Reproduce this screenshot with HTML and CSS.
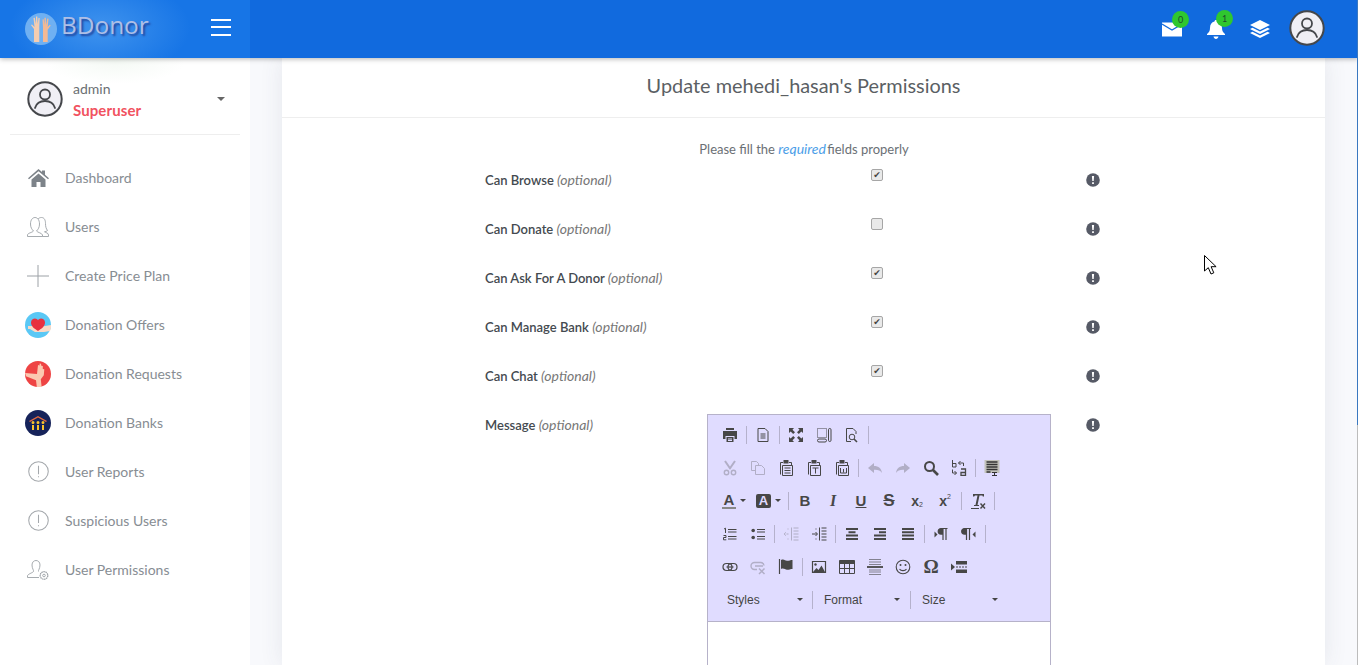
FILE: index.html
```html
<!DOCTYPE html>
<html lang="en">
<head>
<meta charset="UTF-8">
<title>BDonor - User Permissions</title>
<link rel="stylesheet" href="styles.css">
</head>
<body>
<svg class="defs" width="0" height="0">
  <symbol id="avatar" viewBox="0 0 36 36">
    <circle cx="18" cy="18" r="16.7" fill="#f0eff5" stroke="#45474b" stroke-width="2"/>
    <circle cx="18" cy="13.5" r="5" fill="none" stroke="#45474b" stroke-width="1.8"/>
    <path d="M8 27c1.500-5 5.500-7 10-7s8.500 2 10 7" fill="none" stroke="#45474b" stroke-width="1.8" stroke-linecap="round"/>
  </symbol>
  <symbol id="alert" viewBox="0 0 20 20">
    <circle cx="10" cy="10" r="9.300" fill="none" stroke="#a4a8ac"/>
    <path d="M10 4.500v8M10 14.500v1" stroke="#a4a8ac" fill="none"/>
  </symbol>
  <symbol id="info" viewBox="0 0 14 14">
    <circle cx="7" cy="7" r="6.800" fill="#565a66"/>
    <path d="M5.900 3h2.200l-.4 5H6.300zM6.100 9.200h1.800V11H6.100z" fill="#fff"/>
  </symbol>

  <symbol id="print" viewBox="0 0 16 16"><path d="M4 1h8v2H4zM1 4h14v8h-2.500V9h-9v3H1zM4.500 10h7v5h-7z" fill="currentColor"/><path d="M6 12h4M6 13.500h4" stroke="#e0dcff"/></symbol>
  <symbol id="doc" viewBox="0 0 16 16"><path d="M3 1.500h7l3 3v10H3zM5.500 7h5M5.500 9h5M5.500 11h5" fill="none" stroke="currentColor"/></symbol>
  <symbol id="maximize" viewBox="0 0 16 16"><path d="M1 1h5L4.500 2.700 7 5.200 5.200 7 2.700 4.500 1 6zM15 1v5l-1.700-1.500L10.800 7 9 5.200l2.500-2.500L10 1zM1 15v-5l1.700 1.500L5.200 9 7 10.800l-2.500 2.500L6 15zM15 15h-5l1.500-1.700L9 10.800 10.800 9l2.500 2.500L15 10z" fill="currentColor"/></symbol>
  <symbol id="blocks" viewBox="0 0 16 16"><path d="M1.500 1.500h9v9h-9z" fill="none" stroke="currentColor" stroke-dasharray="1 1"/><rect x="1.500" y="12" width="9" height="3" rx="1.500" fill="none" stroke="currentColor"/><rect x="12.500" y="1.500" width="2.500" height="13" rx="1.200" fill="none" stroke="currentColor"/></symbol>
  <symbol id="preview" viewBox="0 0 16 16"><path d="M7 14.500H2.500v-13H9l3 3V7" fill="none" stroke="currentColor"/><circle cx="8" cy="10" r="2.800" fill="none" stroke="currentColor"/><path d="M10 12l3 3" stroke="currentColor" stroke-width="1.600"/></symbol>
  <symbol id="cut" viewBox="0 0 16 16"><path d="M3 1l5.500 8M13 1L7.500 9" stroke="currentColor" stroke-width="2" fill="none"/><circle cx="4.500" cy="12.500" r="2.200" fill="none" stroke="currentColor" stroke-width="1.400"/><circle cx="11.500" cy="12.500" r="2.200" fill="none" stroke="currentColor" stroke-width="1.400"/></symbol>
  <symbol id="copy" viewBox="0 0 16 16"><path d="M1.500 1.500h5l2 2v2M1.500 1.500v9h4M5.500 5.500h6l3 3v6h-9z" fill="none" stroke="currentColor"/></symbol>
  <symbol id="paste" viewBox="0 0 16 16"><path d="M2.500 14.500v-12H5M11 2.500h2.500V5" fill="none" stroke="currentColor"/><path d="M5.500 0h5v3.500h-5z" fill="currentColor"/><path d="M4.500 5.500h10v10h-10zM6.500 8h6M6.500 10.500h6M6.500 13h6" fill="none" stroke="currentColor"/></symbol>
  <symbol id="paste-text" viewBox="0 0 16 16"><path d="M2.500 14.500v-12H5M11 2.500h2.500V5" fill="none" stroke="currentColor"/><path d="M5.500 0h5v3.500h-5z" fill="currentColor"/><path d="M4.500 5.500h10v10h-10zM6.500 8h6M9.500 8v5.500" fill="none" stroke="currentColor"/></symbol>
  <symbol id="paste-word" viewBox="0 0 16 16"><path d="M2.500 14.500v-12H5M11 2.500h2.500V5" fill="none" stroke="currentColor"/><path d="M5.500 0h5v3.500h-5z" fill="currentColor"/><path d="M4.500 5.500h10v10h-10zM6.500 8v5h6V8M9.500 9v3.500" fill="none" stroke="currentColor"/></symbol>
  <symbol id="undo" viewBox="0 0 16 16"><path d="M1 8l6-5v3c4.500 0 7.500 2.500 8 7-1.500-2.500-4-3.500-8-3.300V13z" fill="currentColor"/></symbol>
  <symbol id="redo" viewBox="0 0 16 16"><path d="M15 8L9 3v3C4.500 6 1.500 8.500 1 13c1.500-2.500 4-3.500 8-3.300V13z" fill="currentColor"/></symbol>
  <symbol id="find" viewBox="0 0 16 16"><circle cx="6.500" cy="6.500" r="4.500" fill="none" stroke="currentColor" stroke-width="2"/><path d="M10 10l5 5" stroke="currentColor" stroke-width="2.600"/></symbol>
  <symbol id="replace" viewBox="0 0 16 16"><path d="M1.500 0v7M1.500 3.500H5v3.500H1.500M7.500 3h5v3M9.500 1l-2 2 2 2M1.500 9.500v3.500h4M3.500 11l2 2-2 2" fill="none" stroke="currentColor"/><path d="M10 9h4.500v6.500H10v-3h4.500" fill="none" stroke="currentColor" stroke-width="1.300"/></symbol>
  <symbol id="selectall" viewBox="0 0 16 16"><path d="M.5 0h15v13H.5z" fill="#c2c2ba"/><path d="M2.500 2h11M2.500 4.500h11M2.500 7h11M2.500 9.500h11M2.500 12h4" stroke="#333" stroke-width="1.400"/><path d="M8 12.500h5M8 15.500h5M10.500 12.500v3" stroke="#333"/></symbol>
  <symbol id="clearfmt" viewBox="0 0 16 16"><path d="M1 15.500h8" stroke="currentColor"/><path d="M3 1h11v2.500h-1.200l-.4-1H9.500L7.500 12H9v1H4v-1h1.500L7.500 2.500H5l-.8 1H3z" fill="currentColor"/><path d="M10.500 10.500l4.500 5M15 10.500l-4.500 5" stroke="currentColor" stroke-width="1.400"/></symbol>
  <symbol id="ol" viewBox="0 0 16 16"><path d="M6 3.500h8.500M6 6h8.500M6 10.500h8.500M6 13h8.500" stroke="currentColor" stroke-width="1.100"/><path d="M2 3l1.500-.8V7M1.500 9.500h2.500v2H1.500v2.300h2.800" fill="none" stroke="currentColor"/></symbol>
  <symbol id="ul" viewBox="0 0 16 16"><circle cx="3.200" cy="4.500" r="1.800" fill="currentColor"/><circle cx="3.200" cy="11.500" r="1.800" fill="currentColor"/><path d="M7 3.500h8M7 6h8M7 10.500h8M7 13h8" stroke="currentColor" stroke-width="1.100"/></symbol>
  <symbol id="outdent" viewBox="0 0 16 16"><path d="M8.500 1.500v13M10.500 2h5M10.500 5h5M10.500 8h5M10.500 11h5M10.500 14h5" stroke="currentColor"/><path d="M1 8h5M3 6L1 8l2 2M4.500 3h1M4.500 13h1" fill="none" stroke="currentColor" stroke-dasharray="1 .5"/></symbol>
  <symbol id="indent" viewBox="0 0 16 16"><path d="M8.500 1.500v13M10.500 2h5M10.500 5h5M10.500 8h5M10.500 11h5M10.500 14h5" stroke="currentColor"/><path d="M1 8h5M4.500 6l2 2-2 2M4.500 3h1M4.500 13h1" fill="none" stroke="currentColor"/></symbol>
  <symbol id="center" viewBox="0 0 16 16"><path d="M2 3h12M4.500 6.300h7M2 9.600h12M2 12.900h12" stroke="currentColor" stroke-width="2"/></symbol>
  <symbol id="right" viewBox="0 0 16 16"><path d="M2 3h12M7 6.300h7M2 9.600h12M2 12.900h12" stroke="currentColor" stroke-width="2"/></symbol>
  <symbol id="justify" viewBox="0 0 16 16"><path d="M2 3h12M2 6.300h12M2 9.600h12M2 12.900h12" stroke="currentColor" stroke-width="2"/></symbol>
  <symbol id="ltr" viewBox="0 0 16 16"><path d="M1.500 5.500l3 3-3 3z" fill="currentColor"/><path d="M10 2.500H8a2.800 2.800 0 0 0 0 5.600h2zM10 2.500V14M13 2.500V14M9 2.500h5.500" fill="currentColor" stroke="currentColor" stroke-width="1.200"/></symbol>
  <symbol id="rtl" viewBox="0 0 16 16"><path d="M14.500 5.500l-3 3 3 3z" fill="currentColor"/><path d="M5.500 2.500h-2a2.800 2.800 0 0 0 0 5.600h2zM5.500 2.500V14M8.500 2.500V14M4.500 2.500H10" fill="currentColor" stroke="currentColor" stroke-width="1.200"/></symbol>
  <symbol id="link" viewBox="0 0 16 16"><rect x="1" y="4.500" width="9" height="7" rx="3.500" fill="none" stroke="currentColor" stroke-width="1.200"/><rect x="6" y="4.500" width="9" height="7" rx="3.500" fill="none" stroke="currentColor" stroke-width="1.200"/><path d="M4.500 8h7" stroke="currentColor" stroke-width="1.200"/></symbol>
  <symbol id="unlink" viewBox="0 0 16 16"><path d="M7 10.500H4.500a3.300 3.300 0 0 1 0-7H11a3.300 3.300 0 0 1 3 3M5 7h8" fill="none" stroke="currentColor" stroke-width="1.400"/><path d="M9 9.500l5.500 5.500M14.500 9.500L9 15" stroke="currentColor" stroke-width="1.500"/></symbol>
  <symbol id="flag" viewBox="0 0 16 16"><path d="M1.500 0v15" stroke="currentColor" stroke-width="1.200"/><path d="M3 1c3-1.500 4 .8 6 .8s3.500-.8 5.500-.8v9c-2 0-3.500.8-5.500.8s-3-2-6-.8z" fill="currentColor"/></symbol>
  <symbol id="image" viewBox="0 0 16 16"><path d="M1.500 2.500h13v11h-13z" fill="none" stroke="currentColor" stroke-width="1.200"/><circle cx="4.500" cy="5.500" r="1.200" fill="currentColor"/><path d="M2 13l3.500-4 2 2 3-4.500L14 13z" fill="currentColor"/></symbol>
  <symbol id="table" viewBox="0 0 16 16"><path d="M.5 1.500h15v13H.5z" fill="none" stroke="currentColor"/><path d="M.5 1.500h15v3.500H.5z" fill="currentColor"/><path d="M5.500 5v9M10.500 5v9M1 9.500h14" stroke="currentColor"/></symbol>
  <symbol id="hr" viewBox="0 0 16 16"><path d="M2 .5h12M2 3h12M2 5.500h12M2 11h12M2 13h12M2 15.500h12" stroke="currentColor" opacity=".6"/><path d="M0 8h16" stroke="currentColor" stroke-width="1.800"/></symbol>
  <symbol id="smile" viewBox="0 0 16 16"><circle cx="8" cy="8" r="6.800" fill="none" stroke="currentColor" stroke-width="1.100"/><circle cx="5.500" cy="6" r="1" fill="currentColor"/><circle cx="10.500" cy="6" r="1" fill="currentColor"/><path d="M4.500 10c1.500 2.200 5.500 2.200 7 0" fill="none" stroke="currentColor" stroke-width="1.100"/></symbol>
  <symbol id="pagebreak" viewBox="0 0 16 16"><path d="M0 4.500L4 8l-4 3.500z" fill="currentColor"/><path d="M5 2h11v3.500H5zM5 10.500h11V14H5z" fill="currentColor"/><path d="M5 8h11" stroke="currentColor" stroke-dasharray="2 1"/></symbol>
</svg>

<header class="topbar">
  <div class="brand">
    <svg class="brand-logo" viewBox="0 0 32 32">
      <circle cx="16" cy="16" r="16" fill="#6fb0f2"/>
      <path d="M9 29V16l-3-4 1-.6 2.500 2.500L8.500 5l1.300-.2L11 11V3.500h1.300l.4 7.500.8-6.300 1.200.2-.4 8.600V29z" fill="#f6cdb0"/>
      <path d="M18 29V14.500l-.5-8 1.200-.2.8 6V4.800h1.300l.3 7.200 1.200-6.500 1.200.2-.8 8.300 2-2.200 1 .6-3 4.400V29z" fill="#f4b994"/>
    </svg>
    <span class="brand-name">BDonor</span>
    <button class="menu-toggle" type="button"><span></span><span></span><span></span></button>
  </div>
  <div class="top-actions">
    <div class="top-icon">
      <svg width="20" height="16" viewBox="0 0 20 16"><path d="M0 1.500h20v14H0z" fill="#fff"/><path d="M0 3l10 6 10-6" fill="none" stroke="#116ade" stroke-width="1.200"/></svg>
      <span class="badge">0</span>
    </div>
    <div class="top-icon">
      <svg width="18" height="19" viewBox="0 0 18 19"><path d="M9 0c1 0 1.500.7 1.500 1.500C13.500 2.300 15 4.500 15 8c0 3 1 4.500 3 6v1H0v-1c2-1.500 3-3 3-6 0-3.500 1.500-5.700 4.500-6.500C7.500.7 8 0 9 0zM6.500 16.500h5C11.200 18 10.200 19 9 19s-2.200-1-2.500-2.500z" fill="#fff"/></svg>
      <span class="badge">1</span>
    </div>
    <div class="top-icon">
      <svg width="20" height="18" viewBox="0 0 20 18"><path d="M10 0l10 5-10 5L0 5z" fill="#fff"/><path d="M2.500 7.800L10 11.500l7.500-3.700L20 9l-10 5L0 9zM2.500 11.800L10 15.500l7.500-3.700L20 13l-10 5-10-5z" fill="#fff"/></svg>
    </div>
    <svg class="top-avatar"><use href="#avatar"/></svg>
  </div>
</header>

<div class="layout">
  <aside class="sidebar">
    <div class="user-box">
      <svg class="user-avatar"><use href="#avatar"/></svg>
      <div class="user-info">
        <div class="user-name">admin</div>
        <div class="user-role">Superuser</div>
      </div>
      <span class="caret user-caret"></span>
    </div>
    <ul class="side-menu">
      <li>
        <span class="side-icon"><svg width="21" height="18" viewBox="0 0 21 18"><path d="M10.500 0L14 3V1.500h3v4.200l4 3.500-1 1-9.500-8-9.500 8-1-1zM3.500 10.500l7-6 7 6V18h-5v-5h-4v5h-5z" fill="#7d8389"/></svg></span>
        Dashboard
      </li>
      <li>
        <span class="side-icon"><svg width="22" height="20" viewBox="0 0 22 20" fill="none" stroke="#9ca1a6" stroke-width=".9"><path d="M.5 19.500V18c0-2 5-2.500 6-4-1.500-1.500-3-3.500-3-7C3.500 3 5.500.5 8 .5c2.500 0 4.500 2.500 4.500 6.500 0 3.500-1.500 5.500-3 7 1 1.500 5.500 2 6 4v1.500z"/><path d="M11 2c1-1 2-1.500 3.500-1.500 3 0 4 3 4 6 0 3 .5 5 2 7-1 .8-2 1.300-3 1.300 1 1 4 1 4 3.200v1.500h-6"/></svg></span>
        Users
      </li>
      <li>
        <span class="side-icon"><svg width="22" height="22" viewBox="0 0 22 22"><path d="M11 0v22M0 11h22" stroke="#9ca1a6" stroke-width="1"/></svg></span>
        Create Price Plan
      </li>
      <li>
        <span class="side-icon"><svg width="26" height="26" viewBox="0 0 26 26"><circle cx="13" cy="13" r="13" fill="#5ac8f5"/><path d="M3 14h6l5 1 12-2a13 13 0 0 1-1 6l-6 1H10l-5-3H3z" fill="#fbd9c6"/><path d="M13 19c-4-2.500-7-5-7-8.500C6 7.800 8 6.500 10 6.500c1.300 0 2.400.7 3 1.800.6-1.100 1.700-1.800 3-1.800 2 0 4 1.300 4 4 0 3.500-3 6-7 8.500z" fill="#e8303f"/></svg></span>
        Donation Offers
      </li>
      <li>
        <span class="side-icon"><svg width="26" height="26" viewBox="0 0 26 26"><circle cx="13" cy="13" r="13" fill="#ee4444"/><path d="M0 12l12 1 1-9 1.500.5.200-2 1.300.300.300 2 1.500.2v3l1.500.3-.5 6-3 4 1 9H12l-1-8-10-4z" fill="#fbc8b0"/></svg></span>
        Donation Requests
      </li>
      <li>
        <span class="side-icon"><svg width="26" height="26" viewBox="0 0 26 26"><circle cx="13" cy="13" r="13" fill="#16235a"/><path d="M4 11l9-5 9 5-1 1-8-4.500L5 12z" fill="#e2693f"/><path d="M6.500 12.500a1.500 1.500 0 1 1 3 0 1.500 1.500 0 1 1-3 0zM7 15h2v5H7zM11.500 12.500a1.500 1.500 0 1 1 3 0 1.500 1.500 0 1 1-3 0zM12 15h2v5h-2zM16.500 12.500a1.500 1.500 0 1 1 3 0 1.500 1.500 0 1 1-3 0zM17 15h2v5h-2z" fill="#fcc42c"/></svg></span>
        Donation Banks
      </li>
      <li>
        <span class="side-icon"><svg width="21" height="21"><use href="#alert"/></svg></span>
        User Reports
      </li>
      <li>
        <span class="side-icon"><svg width="21" height="21"><use href="#alert"/></svg></span>
        Suspicious Users
      </li>
      <li>
        <span class="side-icon"><svg width="22" height="20" viewBox="0 0 22 20" fill="none" stroke="#9ca1a6" stroke-width=".9"><path d="M.5 17.500v-1.500c0-2 5-3 6-4.500.5-1-1.500-3-1.500-6.500C5 2 7 .5 9 .5s4 1.500 4 4.500c0 3.500-2 5.500-1.500 6.500M.5 17.500H12"/><circle cx="17" cy="15.500" r="3.800" stroke-dasharray="1.500 .6" stroke-width="1.300"/><circle cx="17" cy="15.500" r="1.300"/></svg></span>
        User Permissions
      </li>
    </ul>
  </aside>

  <main class="content">
    <section class="card">
      <h2 class="card-title">Update mehedi_hasan's Permissions</h2>
      <div class="card-body">
        <p class="hint">Please fill the <em>required</em> fields properly</p>

        <div class="form-row">
          <label class="field-label">Can Browse <i>(optional)</i></label>
          <div class="field-check"><input type="checkbox" checked></div>
          <svg class="field-info"><use href="#info"/></svg>
        </div>
        <div class="form-row">
          <label class="field-label">Can Donate <i>(optional)</i></label>
          <div class="field-check"><input type="checkbox"></div>
          <svg class="field-info"><use href="#info"/></svg>
        </div>
        <div class="form-row">
          <label class="field-label">Can Ask For A Donor <i>(optional)</i></label>
          <div class="field-check"><input type="checkbox" checked></div>
          <svg class="field-info"><use href="#info"/></svg>
        </div>
        <div class="form-row">
          <label class="field-label">Can Manage Bank <i>(optional)</i></label>
          <div class="field-check"><input type="checkbox" checked></div>
          <svg class="field-info"><use href="#info"/></svg>
        </div>
        <div class="form-row">
          <label class="field-label">Can Chat <i>(optional)</i></label>
          <div class="field-check"><input type="checkbox" checked></div>
          <svg class="field-info"><use href="#info"/></svg>
        </div>
        <div class="form-row">
          <label class="field-label">Message <i>(optional)</i></label>
          <div class="editor">
            <div class="editor-toolbar">
              <div class="tool-row">
                <span class="tool"><svg><use href="#print"/></svg></span><span class="tool-sep"></span>
                <span class="tool"><svg><use href="#doc"/></svg></span><span class="tool-sep"></span>
                <span class="tool"><svg><use href="#maximize"/></svg></span>
                <span class="tool"><svg><use href="#blocks"/></svg></span>
                <span class="tool"><svg><use href="#preview"/></svg></span><span class="tool-sep"></span>
              </div>
              <div class="tool-row">
                <span class="tool off"><svg><use href="#cut"/></svg></span>
                <span class="tool off"><svg><use href="#copy"/></svg></span>
                <span class="tool"><svg><use href="#paste"/></svg></span>
                <span class="tool"><svg><use href="#paste-text"/></svg></span>
                <span class="tool"><svg><use href="#paste-word"/></svg></span><span class="tool-sep"></span>
                <span class="tool off"><svg><use href="#undo"/></svg></span>
                <span class="tool off"><svg><use href="#redo"/></svg></span>
                <span class="tool"><svg><use href="#find"/></svg></span>
                <span class="tool"><svg><use href="#replace"/></svg></span><span class="tool-sep"></span>
                <span class="tool"><svg><use href="#selectall"/></svg></span>
              </div>
              <div class="tool-row">
                <span class="tool tool-color"><span class="letter-a">A</span><span class="caret"></span></span>
                <span class="tool tool-color"><span class="letter-a-bg">A</span><span class="caret"></span></span><span class="tool-sep"></span>
                <span class="tool fmt fmt-b">B</span>
                <span class="tool fmt fmt-i">I</span>
                <span class="tool fmt fmt-u">U</span>
                <span class="tool fmt fmt-s">S</span>
                <span class="tool fmt fmt-x">x<sub>2</sub></span>
                <span class="tool fmt fmt-x">x<sup>2</sup></span><span class="tool-sep"></span>
                <span class="tool"><svg><use href="#clearfmt"/></svg></span><span class="tool-sep"></span>
              </div>
              <div class="tool-row">
                <span class="tool"><svg><use href="#ol"/></svg></span>
                <span class="tool"><svg><use href="#ul"/></svg></span><span class="tool-sep"></span>
                <span class="tool off"><svg><use href="#outdent"/></svg></span>
                <span class="tool"><svg><use href="#indent"/></svg></span><span class="tool-sep"></span>
                <span class="tool"><svg><use href="#center"/></svg></span>
                <span class="tool"><svg><use href="#right"/></svg></span>
                <span class="tool"><svg><use href="#justify"/></svg></span><span class="tool-sep"></span>
                <span class="tool"><svg><use href="#ltr"/></svg></span>
                <span class="tool"><svg><use href="#rtl"/></svg></span><span class="tool-sep"></span>
              </div>
              <div class="tool-row">
                <span class="tool"><svg><use href="#link"/></svg></span>
                <span class="tool off"><svg><use href="#unlink"/></svg></span>
                <span class="tool"><svg><use href="#flag"/></svg></span><span class="tool-sep"></span>
                <span class="tool"><svg><use href="#image"/></svg></span>
                <span class="tool"><svg><use href="#table"/></svg></span>
                <span class="tool"><svg><use href="#hr"/></svg></span>
                <span class="tool"><svg><use href="#smile"/></svg></span>
                <span class="tool fmt fmt-omega">Ω</span>
                <span class="tool"><svg><use href="#pagebreak"/></svg></span>
              </div>
              <div class="tool-row">
                <span class="combo">Styles<span class="caret"></span></span><span class="tool-sep"></span>
                <span class="combo">Format<span class="caret"></span></span><span class="tool-sep"></span>
                <span class="combo">Size<span class="caret"></span></span>
              </div>
            </div>
            <div class="editor-area"></div>
          </div>
          <svg class="field-info"><use href="#info"/></svg>
        </div>
      </div>
    </section>
  </main>
</div>

<!-- mouse pointer that was in the screenshot -->
<svg class="pointer" width="13" height="20" viewBox="0 0 13 20"><path d="M.5.5v15.500l3.800-3.300 2.700 6.300 2.800-1.200-2.700-6.100h5z" fill="#fff" stroke="#000"/></svg>
<div class="edge-line"></div>
</body>
</html>
```

FILE: styles.css
```css
* {
  box-sizing: border-box;
}

html,
body {
  height: 100%;
}

body {
  margin: 0;
  overflow: hidden;
  background-color: #f8f9fc;
  font-family: "Lato", "Liberation Sans", sans-serif;
  font-size: 13px;
  color: #555;
}

.defs {
  position: absolute;
}

/* top bar */
.topbar {
  position: relative;
  z-index: 2;
  display: flex;
  justify-content: space-between;
  height: 58px;
  background-color: #116ade;
  box-shadow: 0 1px 5px rgba(0, 0, 0, 0.3);
}

.brand {
  display: flex;
  align-items: center;
  width: 250px;
  padding-left: 25px;
  background-color: #1775e6;
  background-image: radial-gradient(ellipse 90px 50px at 100px 28px, #3f93ee, rgba(63, 147, 238, 0));
}

.brand-logo {
  width: 32px;
  height: 32px;
  margin-right: 4px;
}

.brand-name {
  width: 150px;
  font-family: "Open Sans", sans-serif;
  font-size: 24.4px;
  line-height: 50px;
  padding-bottom: 8px;
  color: #aebfe6;
  text-shadow: 2px 2px 2px #23479e;
}

.menu-toggle {
  display: flex;
  flex-direction: column;
  gap: 5.5px;
  margin-bottom: 4px;
  padding: 0;
  border: 0;
  background: none;
}

.menu-toggle span {
  width: 20px;
  height: 2px;
  background-color: #fff;
}

.top-actions {
  display: flex;
  align-items: center;
  padding-right: 33px;
}

.top-icon {
  position: relative;
  display: flex;
  justify-content: center;
  width: 20px;
  margin-right: 24px;
}

.badge {
  position: absolute;
  top: -10px;
  right: -7px;
  width: 17px;
  height: 17px;
  border-radius: 50%;
  background-color: #2fc72f;
  color: #1c4a2c;
  font-size: 9px;
  line-height: 17px;
  text-align: center;
}

.top-avatar {
  width: 36px;
  height: 36px;
  margin-left: -5px;
  margin-bottom: 2px;
}

/* sidebar */
.layout {
  display: flex;
  height: calc(100% - 58px);
}

.sidebar {
  flex: none;
  width: 250px;
  background-color: #fff;
  background-image: radial-gradient(ellipse 70px 22px at 115px 4px, rgba(226, 240, 226, 0.35), rgba(255, 255, 255, 0));
}

.user-box {
  display: flex;
  align-items: center;
  height: 77px;
  margin: 0 10px;
  padding: 5px 0 0 17px;
  border-bottom: 1px solid #eeeeee;
}

.user-avatar {
  width: 36px;
  height: 36px;
  margin-right: 10px;
}

.user-info {
  flex: 1;
  padding-top: 1px;
}

.user-name {
  font-size: 14px;
  line-height: 22px;
  color: #6b6f73;
}

.user-role {
  font-size: 15px;
  font-weight: 700;
  line-height: 21px;
  letter-spacing: 0.1px;
  color: #f1525f;
}

.caret {
  display: inline-block;
  width: 0;
  height: 0;
  border-top: 3px solid #444;
  border-left: 3px solid transparent;
  border-right: 3px solid transparent;
}

.user-caret {
  margin-right: 15px;
  border-top-width: 4px;
  border-left-width: 4px;
  border-right-width: 4px;
  border-top-color: #666;
}

.side-menu {
  margin: 18px 0 0;
  padding: 0;
  list-style: none;
}

.side-menu li {
  display: flex;
  align-items: center;
  height: 49px;
  padding-left: 25px;
  font-size: 14px;
  color: #878d93;
}

.side-icon {
  display: flex;
  align-items: center;
  justify-content: center;
  width: 26px;
  margin-right: 14px;
}

/* main card */
.content {
  flex: 1;
  padding: 0 33px 0 32px;
}

.card {
  height: 100%;
  background-color: #fff;
  box-shadow: 0 0 22px rgba(60, 70, 100, 0.1);
}

.card-title {
  margin: 0;
  height: 60px;
  border-bottom: 1px solid #eeeeee;
  font-size: 19.9px;
  font-weight: 400;
  line-height: 55px;
  text-align: center;
  color: #5b5f64;
}

.card-body {
  padding-left: 203px;
}

.hint {
  margin: 21px 0 11px;
  width: 638px;
  line-height: 20px;
  text-align: center;
  color: #6b7075;
}

.hint em {
  font-size: 14px;
  margin-right: -2px;
  color: #4c9ee8;
}

.form-row {
  display: flex;
  align-items: flex-start;
  height: 49px;
}

.field-label {
  flex: none;
  width: 222px;
  font-weight: 600;
  line-height: 20px;
  color: #444a50;
}

.field-label i {
  font-size: 14px;
  font-weight: 400;
  color: #777;
}

.field-check {
  display: flex;
  justify-content: center;
  width: 340px;
  margin-right: 4px;
  margin-top: -1px;
}

.field-check input {
  appearance: none;
  display: flex;
  align-items: center;
  justify-content: center;
  width: 12px;
  height: 12px;
  margin: 0;
  border: 1px solid #a6a6a6;
  border-radius: 2px;
  background-color: #e9e9e9;
}

.field-check input:checked::after {
  content: "\2714";
  font-family: "DejaVu Sans", sans-serif;
  font-size: 9px;
  line-height: 10px;
  color: #444;
}

.field-info {
  width: 14px;
  height: 14px;
  margin-left: 35px;
  margin-top: 3px;
}

/* text editor */
.editor {
  flex: none;
  width: 344px;
  height: 260px;
  margin-top: -1px;
  border: 1px solid #b6b2c9;
}

.editor-toolbar {
  height: 207px;
  padding: 3px 0 0 8px;
  border-bottom: 1px solid #b6b2c9;
  background-color: #e0dcff;
}

.tool-row {
  display: flex;
  align-items: center;
  height: 33px;
}

.tool {
  display: flex;
  align-items: center;
  justify-content: center;
  width: 28px;
  height: 33px;
  color: #474747;
}

.tool svg {
  width: 16px;
  height: 16px;
}

.tool.off {
  opacity: 0.3;
}

.tool-sep {
  width: 1px;
  height: 18px;
  margin: 0 2px;
  background-color: #b5b1cc;
}

.tool-color {
  justify-content: flex-start;
  gap: 4px;
  width: 35px;
}

.letter-a {
  width: 14px;
  margin-left: 6px;
  font-family: "Liberation Sans", sans-serif;
  font-size: 15px;
  font-weight: 700;
  line-height: 14px;
  text-align: center;
  border-bottom: 2px solid #888;
}

.letter-a-bg {
  width: 15px;
  height: 14px;
  margin-left: 5px;
  border-radius: 2px;
  background-color: #474747;
  color: #e0dcff;
  font-family: "Liberation Sans", sans-serif;
  font-size: 13px;
  font-weight: 700;
  line-height: 14px;
  text-align: center;
}

.fmt {
  font-family: "Liberation Sans", sans-serif;
  font-size: 15px;
  font-weight: 700;
}

.fmt-i {
  font-family: "Liberation Serif", serif;
  font-style: italic;
  font-size: 16px;
}

.fmt-u {
  text-decoration: underline;
}

.fmt-s {
  font-size: 17px;
  text-decoration: line-through;
}

.fmt-x {
  font-size: 14px;
}

.fmt-x sub,
.fmt-x sup {
  font-size: 7px;
  font-weight: 400;
}

.fmt-x sub {
  transform: translateY(4px);
}

.fmt-x sup {
  transform: translateY(-4px);
}

.fmt-omega {
  font-family: "Liberation Serif", serif;
  font-size: 19px;
}

.combo {
  display: flex;
  align-items: center;
  justify-content: space-between;
  width: 93px;
  padding: 0 8px 0 9px;
  font-family: "Liberation Sans", sans-serif;
  font-size: 12px;
  color: #444;
}

.combo:first-child {
  width: 94px;
  padding: 0 7px 0 11px;
}

.editor-area {
  height: 50px;
  background-color: #fff;
}

.pointer {
  position: absolute;
  left: 1204px;
  top: 255px;
}

/* window edge, scrollbar remnant in the screenshot */
.edge-line {
  position: absolute;
  top: 0;
  right: 0;
  z-index: 3;
  width: 1px;
  height: 100%;
  background-image: linear-gradient(#3a78c0 425px, #bcbcbc 425px);
}
```
